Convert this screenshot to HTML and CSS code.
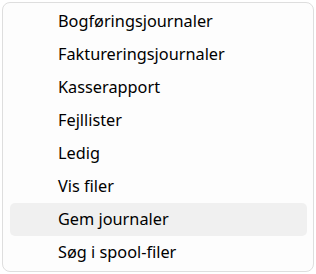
FILE: index.html
```html
<!doctype html>
<html>
<head>
	<meta charset="UTF-8" />
	<title>Menu</title>
	<link rel="stylesheet" href="styles.css">
</head>
<body>
	<div id="menu">
		<div class="menuItem">Bogføringsjournaler</div>
		<div class="menuItem">Faktureringsjournaler</div>
		<div class="menuItem">Kasserapport</div>
		<div class="menuItem">Fejllister</div>
		<div class="menuItem">Ledig</div>
		<div class="menuItem">Vis filer</div>
		<div class="menuItem menuItemHover">Gem journaler</div>
		<div class="menuItem">Søg i spool-filer</div>
	</div>
</body>
</html>
```

FILE: styles.css
```css
body {
	margin: 0;
	padding: 2px;
	background: #fff;
	font-family: "Noto Sans", "Open Sans", sans-serif;
}
#menu {
	width: 312px;
	height: 270px;
	box-sizing: border-box;
	border: 1px solid #dedede;
	border-radius: 8px;
	padding: 2px 6px 0 7px;
	background: #fdfdfd;
}
.menuItem {
	height: 33px;
	line-height: 33px;
	padding: 0 0 0 48px;
	font-size: 16.3px;
	color: #000;
	border-radius: 5px;
}
.menuItemHover {
	background: #f0f0f0;
}
```
